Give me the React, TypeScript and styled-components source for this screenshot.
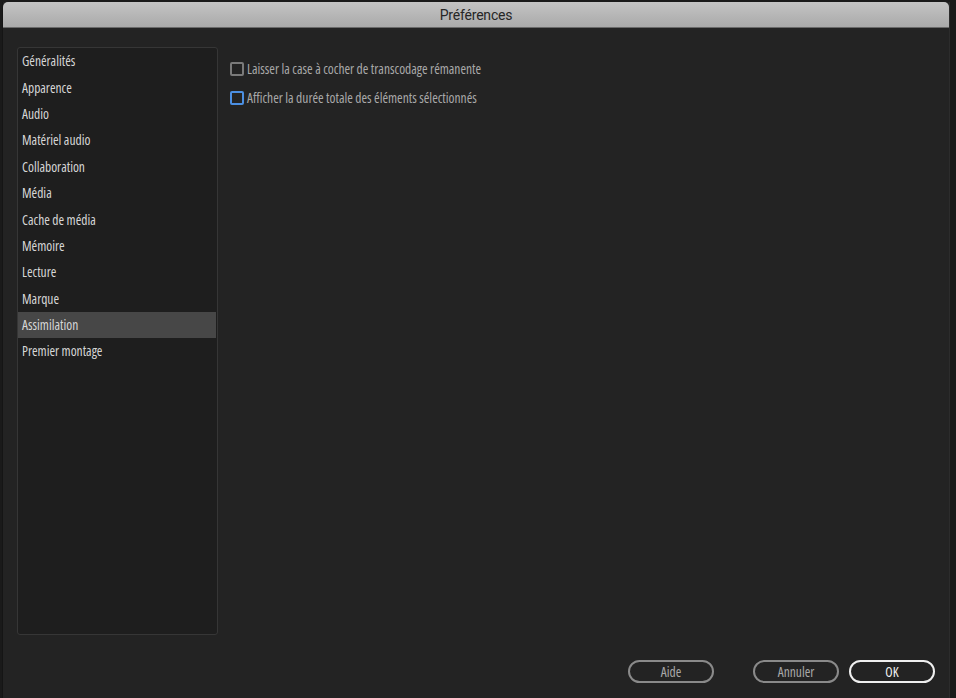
import React from "react";
import styled, { createGlobalStyle } from "styled-components";

const Global = createGlobalStyle`
  html, body { margin: 0; padding: 0; background: #191919; }
  body { font-family: "Open Sans", Roboto, sans-serif; font-stretch: 75%; font-weight: 400; }
  * { box-sizing: border-box; }
`;

const Screen = styled.div`
  width: 956px;
  height: 698px;
  background: #1a1a1a;
  padding: 2px 0 0 2px;
  display: flex;
  overflow: hidden;
`;

const Window = styled.div`
  width: 948px;
  height: 696px;
  display: flex;
  flex-direction: column;
  background: #232323;
  border-left: 1px solid #151515;
  border-right: 1px solid #2c2c2c;
`;

const TitleBar = styled.div`
  height: 26px;
  flex: none;
  border-radius: 5px 5px 0 0;
  background: linear-gradient(#c4c4c4, #b4b4b4 60%, #aaaaaa);
  border-bottom: 1px solid #6a6a6a;
  display: flex;
  align-items: center;
  justify-content: center;
  color: #262626;
  font-family: Roboto, "Liberation Sans", sans-serif;
  font-stretch: 100%;
  font-size: 14px;
  letter-spacing: -0.2px;
`;

const Body = styled.div`
  flex: 1;
  display: flex;
  flex-direction: column;
  padding: 19px 14px 0 14px;
`;

const Main = styled.div`
  display: flex;
  height: 588px;
  gap: 12px;
`;

const Sidebar = styled.div`
  width: 201px;
  flex: none;
  background: #1e1e1e;
  border: 1px solid #363636;
  border-radius: 3px;
  padding: 0 1px 0 0;
`;

const NavItem = styled.div<{ $active?: boolean }>`
  height: 26.4px;
  display: flex;
  align-items: center;
  padding-left: 4px;
  font-size: 13.5px;
  color: #d6d6d6;
  background: ${(p) => (p.$active ? "#474747" : "transparent")};
`;

const Options = styled.div`
  padding-top: 15px;
  display: flex;
  flex-direction: column;
  gap: 15px;
`;

const OptionRow = styled.label`
  display: flex;
  align-items: center;
  gap: 3px;
  height: 14px;
  font-size: 13.5px;
  color: #a9a9a9;
`;

const Box = styled.span<{ $focus?: boolean }>`
  width: 14px;
  height: 14px;
  flex: none;
  border: 2px solid ${(p) => (p.$focus ? "#4b8fe2" : "#7a7a7a")};
  border-radius: 2px;
  background: #232323;
`;

const Footer = styled.div`
  display: flex;
  justify-content: flex-end;
  align-items: center;
  padding-top: 25px;
`;

const Button = styled.button<{ $primary?: boolean; $gapAfter?: number }>`
  width: 86px;
  height: 23px;
  border-radius: 12px;
  background: transparent;
  border: 2px solid ${(p) => (p.$primary ? "#efefef" : "#8a8a8a")};
  color: ${(p) => (p.$primary ? "#f2f2f2" : "#a8a8a8")};
  font-family: "Open Sans", Roboto, sans-serif;
  font-stretch: 75%;
  font-weight: 400;
  font-size: 13.5px;
  padding: 0;
  margin-right: ${(p) => p.$gapAfter ?? 0}px;
`;

const items = [
  "Généralités",
  "Apparence",
  "Audio",
  "Matériel audio",
  "Collaboration",
  "Média",
  "Cache de média",
  "Mémoire",
  "Lecture",
  "Marque",
  "Assimilation",
  "Premier montage",
];

export default function App() {
  return (
    <>
      <Global />
      <Screen>
        <Window>
          <TitleBar>Préférences</TitleBar>
          <Body>
            <Main>
              <Sidebar>
                {items.map((t) => (
                  <NavItem key={t} $active={t === "Assimilation"}>
                    {t}
                  </NavItem>
                ))}
              </Sidebar>
              <Options>
                <OptionRow>
                  <Box />
                  Laisser la case à cocher de transcodage rémanente
                </OptionRow>
                <OptionRow>
                  <Box $focus />
                  Afficher la durée totale des éléments sélectionnés
                </OptionRow>
              </Options>
            </Main>
            <Footer>
              <Button $gapAfter={39}>Aide</Button>
              <Button $gapAfter={10}>Annuler</Button>
              <Button $primary>OK</Button>
            </Footer>
          </Body>
        </Window>
      </Screen>
    </>
  );
}
